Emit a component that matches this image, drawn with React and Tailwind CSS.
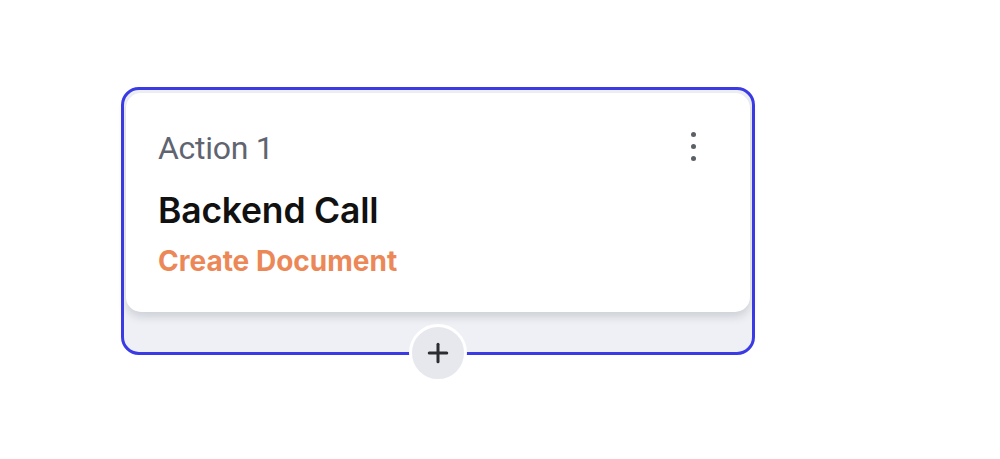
import { Plus } from "lucide-react";

const ActionNode = () => {
  return (
    <div className="relative w-[634px] h-[268px] rounded-[18px] border-[3px] border-[#3b3be6] bg-[#eef0f5] px-[2px] pt-[3px]">
      {/* Card */}
      <div className="h-[219px] rounded-[15px] bg-white shadow-[0_5px_8px_rgba(60,64,80,0.18)] flex justify-between pl-[32px] pr-[54px] pt-[38px]">
        <div className="flex flex-col">
          <span className="font-['Roboto',sans-serif] text-[32px] leading-[34px] text-[#5f6570] tracking-[-0.3px]">
            Action 1
          </span>
          <span className="mt-[26px] font-['Inter',sans-serif] font-semibold text-[35.5px] leading-[40px] text-[#111] tracking-[-0.2px]">
            Backend Call
          </span>
          <span className="mt-[14px] font-['Inter',sans-serif] font-bold text-[28px] leading-[32px] text-[#ec8858]">
            Create Document
          </span>
        </div>
        <div className="flex flex-col gap-[7px] pt-[1px]">
          <span className="w-[5px] h-[5px] rounded-full bg-[#5b5f66]" />
          <span className="w-[5px] h-[5px] rounded-full bg-[#5b5f66]" />
          <span className="w-[5px] h-[5px] rounded-full bg-[#5b5f66]" />
        </div>
      </div>

      {/* Add button over the bottom border */}
      <button className="absolute left-1/2 -translate-x-1/2 bottom-[-30px] w-[58px] h-[58px] rounded-full border-[3px] border-white bg-[#e6e8ee] flex items-center justify-center">
        <Plus className="w-[30px] h-[30px] text-[#2b2d33]" strokeWidth={2.4} />
      </button>
    </div>
  );
};

export default function App() {
  return (
    <div className="min-h-screen bg-white pt-[87px] pl-[121px]">
      <ActionNode />
    </div>
  );
}
